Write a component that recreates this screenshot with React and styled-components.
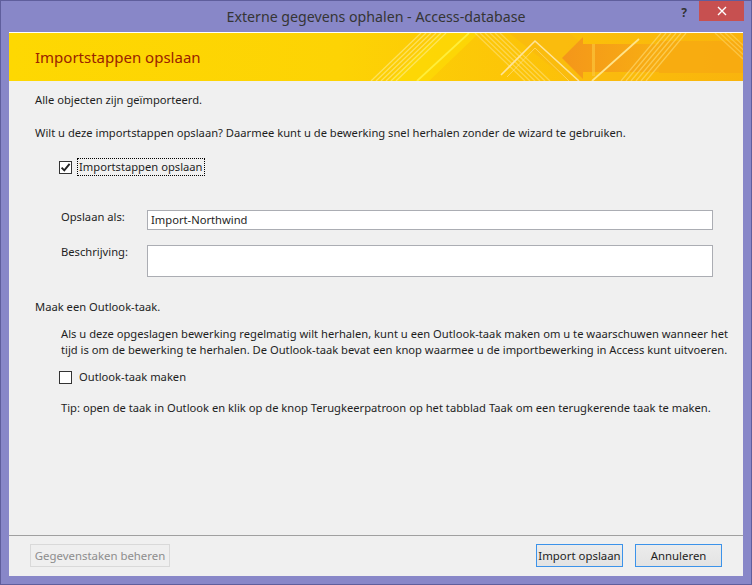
import React from 'react';
import styled, { createGlobalStyle } from 'styled-components';

const GlobalStyle = createGlobalStyle`
  html, body {
    margin: 0;
    padding: 0;
    background: #8887c8;
  }
  body {
    font-family: 'Noto Sans', 'Open Sans', sans-serif;
  }
`;

const Window = styled.div`
  width: 752px;
  height: 585px;
  box-sizing: border-box;
  background: #8887c8;
  border: 1px solid #5f5e9c;
  display: flex;
  flex-direction: column;
`;

const TitleBar = styled.div`
  height: 31px;
  display: grid;
  grid-template-columns: 1fr auto 1fr;
  align-items: start;
`;

const TitleText = styled.div`
  grid-column: 2;
  height: 31px;
  line-height: 31px;
  font-size: 14.2px;
  color: #353535;
  white-space: nowrap;
`;

const TitleControls = styled.div`
  grid-column: 3;
  justify-self: end;
  display: flex;
  margin-right: 7px;
`;

const HelpButton = styled.div`
  width: 30px;
  height: 20px;
  text-align: center;
  font-size: 12px;
  font-weight: bold;
  line-height: 24px;
  color: #333;
`;

const CloseButton = styled.div`
  width: 45px;
  height: 20px;
  background: #c75050;
  color: #fff;
  display: flex;
  align-items: center;
  justify-content: center;
`;

const Client = styled.div`
  flex: 1;
  margin: 0 8px 8px 8px;
  background: #f0f0f0;
  display: flex;
  flex-direction: column;
  font-size: 11.2px;
  color: #1e1e1e;
`;

const Banner = styled.div`
  position: relative;
  height: 48px;
  border-top: 1px solid #fff;
  background: linear-gradient(90deg, #fed802 0%, #fdd304 45%, #fcc408 70%, #f9b40d 100%);
  display: flex;
  align-items: center;
  overflow: hidden;
`;

const BannerArt = styled.svg`
  position: absolute;
  left: 0;
  top: 0;
`;

const BannerTitle = styled.div`
  position: relative;
  padding-left: 26px;
  font-size: 15px;
  color: #9a2300;
`;

const Body = styled.div`
  flex: 1;
  padding-left: 26px;
  display: flex;
  flex-direction: column;
  align-items: flex-start;
`;

const Line = styled.div`
  line-height: 16px;
  margin-top: ${(p) => p.$top || 0}px;
  margin-left: ${(p) => p.$indent || 0}px;
  white-space: nowrap;
`;

const CheckRow = styled.div`
  display: flex;
  align-items: center;
  height: 18px;
  margin-top: ${(p) => p.$top}px;
  margin-left: 24px;
`;

const Box = styled.div`
  width: 11px;
  height: 11px;
  border: 1px solid #333;
  background: #fff;
  display: flex;
  align-items: center;
  justify-content: center;
`;

const CheckLabel = styled.span`
  margin-left: 5px;
  padding: 0 1px;
  line-height: 16px;
  border: 1px dotted ${(p) => (p.$focused ? '#000' : 'transparent')};
`;

const FieldRow = styled.div`
  display: flex;
  align-items: flex-start;
  margin-top: ${(p) => p.$top}px;
  margin-left: 26px;
`;

const FieldLabel = styled.div`
  width: 86px;
  line-height: 14px;
`;

const Field = styled.div`
  width: 566px;
  height: ${(p) => p.$height}px;
  box-sizing: border-box;
  background: #fff;
  border: 1px solid #abadb3;
  padding: 1px 3px;
  line-height: 16px;
`;

const Footer = styled.div`
  border-top: 1px solid #a0a0a0;
  padding: 8px 21px 9px 21px;
  display: flex;
  align-items: center;
  gap: 12px;
`;

const Button = styled.div`
  height: 23px;
  box-sizing: border-box;
  width: ${(p) => p.$width}px;
  display: flex;
  align-items: center;
  justify-content: center;
  font-size: 11.4px;
  border: 1px solid ${(p) => (p.$disabled ? '#d9d9d9' : '#3c93ea')};
  background: ${(p) => (p.$disabled ? '#efefef' : 'linear-gradient(#ececec, #e3e3e3)')};
  color: ${(p) => (p.$disabled ? '#8d8d8d' : '#1e1e1e')};
  margin-left: ${(p) => (p.$push ? 'auto' : '0')};
`;

const Check = () => (
  <svg width="11" height="11" viewBox="0 0 11 11">
    <path d="M1.6 5.6 L4.3 8.4 L9.6 1.8" fill="none" stroke="#222" strokeWidth="1.9" />
  </svg>
);

const Checkbox = ({ checked, focused, top, children }) => (
  <CheckRow $top={top}>
    <Box>{checked && <Check />}</Box>
    <CheckLabel $focused={focused}>{children}</CheckLabel>
  </CheckRow>
);

const stripes = (x1, y1, x2, y2, n, step, color, op) =>
  Array.from({ length: n }, (_, i) => (
    <line
      key={`${x1}-${i}`}
      x1={x1 + i * step}
      y1={y1}
      x2={x2 + i * step}
      y2={y2}
      stroke={color}
      strokeWidth="1.3"
      opacity={op}
    />
  ));

// banner coordinates: x - 9, y - 33 of the window
const Art = () => (
  <BannerArt width="734" height="48" viewBox="0 0 734 48">
    <defs>
      <linearGradient id="arrow" x1="0" x2="1" y1="0" y2="0">
        <stop offset="0" stopColor="#f4961a" />
        <stop offset="1" stopColor="#f8ae12" />
      </linearGradient>
    </defs>
    <polygon points="380,48 430,0 470,0 420,48" fill="#fee006" opacity="0.55" />
    <polygon points="500,0 560,0 620,48 560,48" fill="#f9b90f" opacity="0.7" />
    <polygon points="650,8 734,8 734,40 650,40" fill="#f7a912" opacity="0.8" />
    {stripes(362, 48, 412, 0, 6, 5, '#ffec8a', 0.65)}
    <line x1="408" y1="48" x2="460" y2="0" stroke="#ffee3a" strokeWidth="1.8" />
    {stripes(466, 0, 516, 48, 6, 5, '#ffe27a', 0.6)}
    <polyline points="492,42 526,8 570,48" fill="none" stroke="#ffe49a" strokeWidth="1.6" />
    <polyline points="498,44 526,15 560,48" fill="none" stroke="#ffe49a" strokeWidth="1" opacity="0.6" />
    <polygon points="553,25 574,4 574,11 650,11 650,39 574,39 574,46" fill="url(#arrow)" />
    <rect x="583" y="11" width="3" height="32" fill="#fbc43a" opacity="0.7" />
    <line x1="583" y1="48" x2="630" y2="6" stroke="#ffe48a" strokeWidth="1.8" />
    {stripes(612, 48, 652, 0, 6, 5, '#ffdf7a', 0.6)}
    {stripes(706, 0, 734, 26, 4, 5, '#ffd86a', 0.55)}
  </BannerArt>
);

const App = () => (
  <>
    <GlobalStyle />
    <Window>
      <TitleBar>
        <TitleText>Externe gegevens ophalen - Access-database</TitleText>
        <TitleControls>
          <HelpButton>?</HelpButton>
          <CloseButton>
            <svg width="10" height="10" viewBox="0 0 10 10">
              <path d="M1 1 L9 9 M9 1 L1 9" stroke="#fff" strokeWidth="1.4" />
            </svg>
          </CloseButton>
        </TitleControls>
      </TitleBar>
      <Client>
        <Banner>
          <Art />
          <BannerTitle>Importstappen opslaan</BannerTitle>
        </Banner>
        <Body>
          <Line $top={11}>Alle objecten zijn geïmporteerd.</Line>
          <Line $top={17}>
            Wilt u deze importstappen opslaan? Daarmee kunt u de bewerking snel herhalen zonder de wizard te gebruiken.
          </Line>
          <Checkbox checked focused top={17}>
            Importstappen opslaan
          </Checkbox>
          <FieldRow $top={34}>
            <FieldLabel>Opslaan als:</FieldLabel>
            <Field $height={20}>Import-Northwind</Field>
          </FieldRow>
          <FieldRow $top={15}>
            <FieldLabel>Beschrijving:</FieldLabel>
            <Field $height={32} />
          </FieldRow>
          <Line $top={22}>Maak een Outlook-taak.</Line>
          <Line $top={11} $indent={26}>
            Als u deze opgeslagen bewerking regelmatig wilt herhalen, kunt u een Outlook-taak maken om u te waarschuwen wanneer het
            <br />
            tijd is om de bewerking te herhalen. De Outlook-taak bevat een knop waarmee u de importbewerking in Access kunt uitvoeren.
          </Line>
          <Checkbox top={10}>Outlook-taak maken</Checkbox>
          <Line $top={14} $indent={26}>
            Tip: open de taak in Outlook en klik op de knop Terugkeerpatroon op het tabblad Taak om een terugkerende taak te maken.
          </Line>
        </Body>
        <Footer>
          <Button $disabled $width={140}>Gegevenstaken beheren</Button>
          <Button $push $width={87}>Import opslaan</Button>
          <Button $width={87}>Annuleren</Button>
        </Footer>
      </Client>
    </Window>
  </>
);

export default App;
